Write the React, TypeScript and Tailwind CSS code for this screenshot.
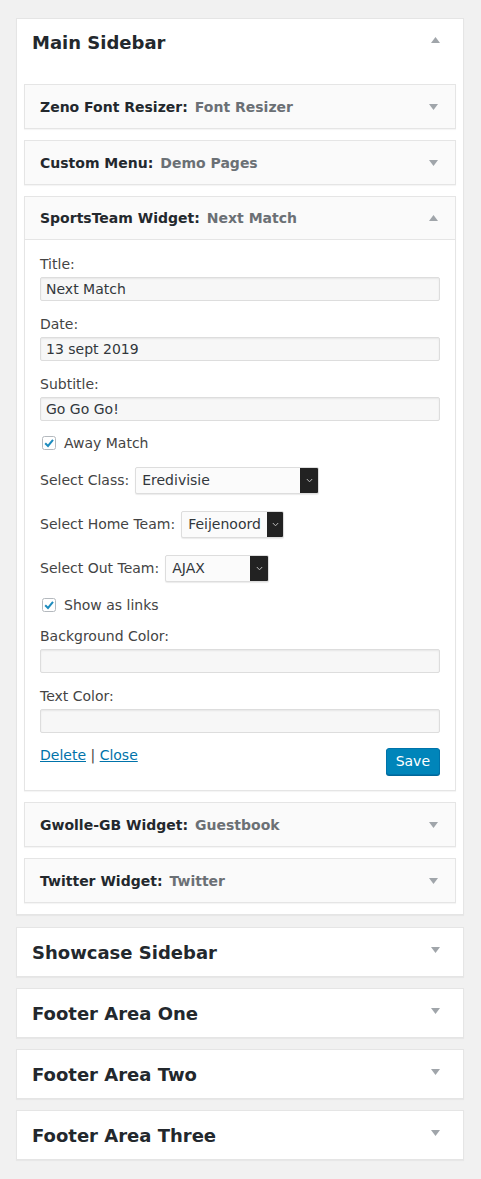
import React from "react";

const font = { fontFamily: '"DejaVu Sans", "Liberation Sans", sans-serif' };

function Arrow({ up = false }: { up?: boolean }) {
  return (
    <svg width="9" height="6" viewBox="0 0 9 6" className="shrink-0">
      {up ? <path d="M4.5 0 L9 6 L0 6 Z" fill="#a0a5aa" /> : <path d="M0 0 L9 0 L4.5 6 Z" fill="#a0a5aa" />}
    </svg>
  );
}

function WidgetHead({ name, title, open = false }: { name: string; title: string; open?: boolean }) {
  return (
    <div className={`flex h-[43px] items-center justify-between bg-[#fafafa] pl-[15px] pr-[17px] ${open ? "border-b border-[#e5e5e5]" : ""}`}>
      <div className="text-[14px] font-bold leading-[18px] text-[#23282d]">
        {name}:<span className="ml-[7px] text-[#6b7075]">{title}</span>
      </div>
      <Arrow up={open} />
    </div>
  );
}

function Widget({ name, title }: { name: string; title: string }) {
  return (
    <div className="border border-[#e5e5e5] shadow-[0_1px_1px_rgba(0,0,0,0.04)]">
      <WidgetHead name={name} title={title} />
    </div>
  );
}

function Input({ value = "" }: { value?: string }) {
  return (
    <div className="mt-[4px] flex h-[24px] items-center rounded-[2px] border border-[#ddd] bg-[#f7f7f7] px-[5px] text-[14px] text-[#32373c] shadow-[inset_0_1px_2px_rgba(0,0,0,0.07)]">
      {value}
    </div>
  );
}

function Field({ label, value, className = "" }: { label: string; value?: string; className?: string }) {
  return (
    <div className={className}>
      <div className="h-[18px] text-[14px] leading-[18px] text-[#444]">{label}</div>
      <Input value={value} />
    </div>
  );
}

function Check({ label, className = "" }: { label: string; className?: string }) {
  return (
    <div className={`flex h-[18px] items-center text-[14px] text-[#444] ${className}`}>
      <svg width="16" height="16" viewBox="0 0 16 16" className="ml-[1px] mr-[7px]">
        <rect x="1.5" y="1.5" width="13" height="13" rx="2" fill="#fff" stroke="#b4b9be" />
        <path d="M4.2 8.2 L7 11 L12 4.8" fill="none" stroke="#1e8cbe" strokeWidth="2" />
      </svg>
      {label}
    </div>
  );
}

function Select({ label, value, width, className = "" }: { label: string; value: string; width: number; className?: string }) {
  const w = width === 184 ? "w-[184px]" : width === 103 ? "w-[103px]" : "w-[104px]";
  return (
    <div className={`flex items-center text-[14px] text-[#444] ${className}`}>
      <span className="mr-[6px]">{label}</span>
      <div className={`flex h-[27px] ${w} overflow-hidden rounded-[2px] border border-[#ddd] bg-[#fbfbfb] shadow-[0_1px_1px_rgba(0,0,0,0.08)]`}>
        <div className="flex flex-1 items-center px-[6px] text-[#32373c]">{value}</div>
        <div className="flex w-[18px] items-center justify-center bg-[#222]">
          <svg width="7" height="5" viewBox="0 0 7 5">
            <path d="M0.8 1 L3.5 3.8 L6.2 1" fill="none" stroke="#bbb" strokeWidth="1" />
          </svg>
        </div>
      </div>
    </div>
  );
}

function SportsWidget() {
  return (
    <div className="border border-[#e5e5e5] bg-white shadow-[0_1px_1px_rgba(0,0,0,0.04)]">
      <WidgetHead name="SportsTeam Widget" title="Next Match" open />
      <div className="flex flex-col px-[15px] pb-[15px] pt-[15px]">
        <Field label="Title:" value="Next Match" />
        <Field label="Date:" value="13 sept 2019" className="mt-[14px]" />
        <Field label="Subtitle:" value="Go Go Go!" className="mt-[14px]" />
        <Check label="Away Match" className="mt-[13px]" />
        <Select label="Select Class:" value="Eredivisie" width={184} className="mt-[15px]" />
        <Select label="Select Home Team:" value="Feijenoord" width={103} className="mt-[17px]" />
        <Select label="Select Out Team:" value="AJAX" width={104} className="mt-[17px]" />
        <Check label="Show as links" className="mt-[14px]" />
        <Field label="Background Color:" className="mt-[13px]" />
        <Field label="Text Color:" className="mt-[14px]" />
        <div className="mt-[15px] flex items-start justify-between">
          <div className="mt-[-2px] text-[14px] leading-[18px] text-[#444]">
            <a className="text-[#0073aa] underline">Delete</a> | <a className="text-[#0073aa] underline">Close</a>
          </div>
          <button className="h-[27px] rounded-[3px] border border-[#0073aa] bg-[#0085ba] px-[9px] text-[14px] text-white shadow-[0_1px_0_#006799]">
            Save
          </button>
        </div>
      </div>
    </div>
  );
}

function Sidebar({ title }: { title: string }) {
  return (
    <div className="flex h-[50px] items-center justify-between border border-[#e5e5e5] bg-white pl-[15px] pr-[23px] shadow-[0_1px_1px_rgba(0,0,0,0.04)]">
      <h2 className="text-[18px] font-bold text-[#23282d]">{title}</h2>
      <div className="mb-[4px]">
        <Arrow />
      </div>
    </div>
  );
}

export default function App() {
  return (
    <div style={font} className="min-h-[1179px] bg-[#f1f1f1] pl-[16px] pr-[17px] pt-[18px]">
      <div className="flex flex-col gap-[11px]">
        <div className="mb-[1px] border border-[#e5e5e5] bg-white shadow-[0_1px_1px_rgba(0,0,0,0.04)]">
          <div className="flex h-[57px] items-start justify-between pl-[15px] pr-[23px] pt-[12px]">
            <h2 className="text-[18px] font-bold leading-[24px] text-[#23282d]">Main Sidebar</h2>
            <div className="mt-[6px]">
              <Arrow up />
            </div>
          </div>
          <div className="flex flex-col gap-[11px] px-[7px] pb-[11px] pt-[8px]">
            <Widget name="Zeno Font Resizer" title="Font Resizer" />
            <Widget name="Custom Menu" title="Demo Pages" />
            <SportsWidget />
            <Widget name="Gwolle-GB Widget" title="Guestbook" />
            <Widget name="Twitter Widget" title="Twitter" />
          </div>
        </div>
        <Sidebar title="Showcase Sidebar" />
        <Sidebar title="Footer Area One" />
        <Sidebar title="Footer Area Two" />
        <Sidebar title="Footer Area Three" />
      </div>
    </div>
  );
}
